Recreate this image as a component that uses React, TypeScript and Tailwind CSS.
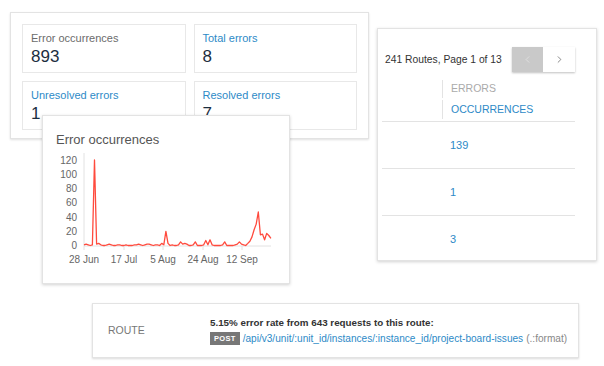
import { ChevronLeft, ChevronRight } from "lucide-react";

const stats = [
  { label: "Error occurrences", value: "893", link: false },
  { label: "Total errors", value: "8", link: true },
  { label: "Unresolved errors", value: "1", link: true },
  { label: "Resolved errors", value: "7", link: true },
];

// daily error counts, 28 Jun onwards
const counts = [
  1, 2, 1, 0, 1, 120, 2, 3, 1, 0, 0, 1, 2, 1, 0, 0, 1, 1, 0, 0,
  1, 0, 0, 0, 1, 1, 2, 1, 0, 1, 2, 2, 1, 0, 1, 1, 0, 3, 1, 20,
  3, 0, 1, 0, 0, 1, 5, 2, 3, 2, 0, 0, 1, 5, 0, 0, 0, 1, 7, 1,
  8, 1, 0, 0, 0, 0, 1, 5, 0, 0, 0, 0, 1, 2, 5, 2, 1, 0, 3, 6,
  12, 22, 30, 47, 15, 16, 8, 17, 14, 10,
];

const yTicks = [120, 100, 80, 60, 40, 20, 0];
const xTicks = [
  { x: 84, label: "28 Jun" },
  { x: 124, label: "17 Jul" },
  { x: 163, label: "5 Aug" },
  { x: 203, label: "24 Aug" },
  { x: 242, label: "12 Sep" },
];

const yOf = (v: number) => 244.5 - v * 0.7125;

const Chart = () => {
  const points = counts.map((v, i) => `${(84 + i * 2.1).toFixed(1)},${yOf(v).toFixed(1)}`).join(" ");
  return (
    <svg width={240} height={120} viewBox="44 150 240 120" className="block">
      <line x1={84} y1={152} x2={84} y2={245} stroke="#e2e2e2" strokeWidth={1} />
      <line x1={84} y1={245} x2={271} y2={245} stroke="#e2e2e2" strokeWidth={1} />
      {xTicks.map((t) => (
        <line key={t.label} x1={t.x} y1={245} x2={t.x} y2={249} stroke="#e2e2e2" />
      ))}
      {yTicks.map((v) => (
        <text key={v} x={77} y={yOf(v) + 3.5} textAnchor="end" fontSize={10} fill="#666">
          {v}
        </text>
      ))}
      {xTicks.map((t) => (
        <text key={t.label} x={t.x} y={261.5} textAnchor="middle" fontSize={10} fill="#666">
          {t.label}
        </text>
      ))}
      <polyline points={points} fill="none" stroke="#ff4a3d" strokeWidth={1.3} strokeLinejoin="round" />
    </svg>
  );
};

const App = () => {
  return (
    <div className="relative w-[604px] h-[366px] bg-white overflow-hidden font-['Liberation_Sans',Arial,sans-serif]">
      {/* Stats panel */}
      <div className="absolute left-[10px] top-[12px] w-[359px] h-[127px] bg-white border border-[#e3e3e3] shadow-[0_1px_2px_rgba(0,0,0,0.12)] p-[11px]">
        <div className="grid grid-cols-2 gap-x-[8px] gap-y-[8px]">
          {stats.map((s) => (
            <div key={s.label} className="h-[49px] border border-[#e8e8e8] px-[8px] pt-[6px]">
              <div className={`text-[11px] leading-[14px] ${s.link ? "text-[#2d8ac7]" : "text-[#6b6b6b]"}`}>{s.label}</div>
              <div className="text-[17px] leading-[20px] mt-[2px] text-[#1c2e3f]">{s.value}</div>
            </div>
          ))}
        </div>
      </div>

      {/* Chart card */}
      <div className="absolute left-[42px] top-[115px] w-[248px] h-[169px] bg-white border border-[#e3e3e3] shadow-[0_1px_3px_rgba(0,0,0,0.18)]">
        <div className="pl-[13px] pt-[16px] text-[13px] leading-[16px] text-[#555]">Error occurrences</div>
        <div className="pl-[1px] pt-[3px]">
          <Chart />
        </div>
      </div>

      {/* Routes card */}
      <div className="absolute left-[377px] top-[28px] w-[220px] h-[233px] bg-white border border-[#e3e3e3] shadow-[0_1px_3px_rgba(0,0,0,0.18)]">
        <div className="flex items-center pl-[7px] pt-[18px]">
          <span className="text-[10.3px] text-[#333] whitespace-nowrap w-[127px] shrink-0">241 Routes, Page 1 of 13</span>
          <div className="flex h-[25px] shadow-[0_1px_2px_rgba(0,0,0,0.25)]">
            <div className="w-[31px] bg-[#c9c9c9] flex items-center justify-center">
              <ChevronLeft size={11} strokeWidth={1.5} color="#e6e6e6" />
            </div>
            <div className="w-[32px] bg-white flex items-center justify-center">
              <ChevronRight size={11} strokeWidth={1.5} color="#555" />
            </div>
          </div>
        </div>
        <div className="ml-[4px] mr-[21px] mt-[8px]">
          <div className="pl-[60px] pb-[2px] border-b border-[#e3e3e3]">
            <div className="border-l border-[#e3e3e3] pl-[8px] h-[18px] flex items-center text-[10.5px] text-[#aaa] whitespace-nowrap">ERRORS</div>
            <div className="border-l border-[#e3e3e3] pl-[8px] h-[19px] mt-[2px] flex items-center text-[10.5px] text-[#2d8ac7] font-medium whitespace-nowrap">OCCURRENCES</div>
          </div>
          {["139", "1", "3"].map((v, i) => (
            <div key={i} className={`h-[47px] flex items-center pl-[68px] text-[11px] text-[#2d8ac7] ${i < 2 ? "border-b border-[#e3e3e3]" : ""}`}>
              {v}
            </div>
          ))}
        </div>
      </div>

      {/* Route card */}
      <div className="absolute left-[92px] top-[303px] w-[487px] h-[55px] bg-white border border-[#e3e3e3] shadow-[0_1px_2px_rgba(0,0,0,0.15)] flex items-center">
        <div className="w-[117px] shrink-0 pl-[15px] text-[10.5px] text-[#777]">ROUTE</div>
        <div className="flex flex-col whitespace-nowrap">
          <div className="text-[9.8px] leading-[14px] font-bold text-[#333]">5.15% error rate from 643 requests to this route:</div>
          <div className="flex items-center mt-[1px] text-[10.1px] leading-[15px]">
            <span className="bg-[#777] text-white text-[7.5px] font-bold px-[4px] h-[13px] leading-[13px] tracking-[0.3px]">POST</span>
            <span className="ml-[3px] text-[#2d8ac7]">/api/v3/unit/:unit_id/instances/:instance_id/project-board-issues</span>
            <span className="ml-[3px] text-[#888]">(.:format)</span>
          </div>
        </div>
      </div>
    </div>
  );
};

export default App;
